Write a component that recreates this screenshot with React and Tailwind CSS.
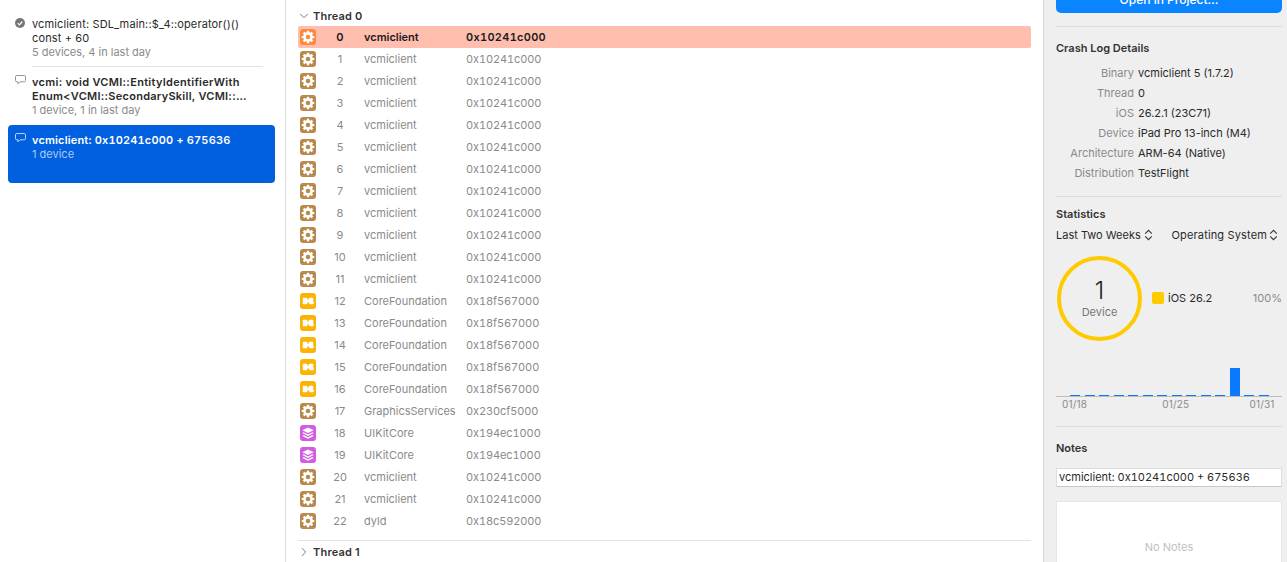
import { ChevronDown, ChevronRight } from 'lucide-react'

const vcmi = ['vcmiclient', '0x10241c000', 'gear']
const cf = ['CoreFoundation', '0x18f567000', 'cf']
const uikit = ['UIKitCore', '0x194ec1000', 'stack']

const frames = [
  vcmi, vcmi, vcmi, vcmi, vcmi, vcmi, vcmi, vcmi, vcmi, vcmi, vcmi, vcmi,
  cf, cf, cf, cf, cf,
  ['GraphicsServices', '0x230cf5000', 'gear'],
  uikit, uikit,
  vcmi, vcmi,
  ['dyld', '0x18c592000', 'gear'],
]

const details = [
  ['Binary', 'vcmiclient 5 (1.7.2)'],
  ['Thread', '0'],
  ['iOS', '26.2.1 (23C71)'],
  ['Device', 'iPad Pro 13-inch (M4)'],
  ['Architecture', 'ARM-64 (Native)'],
  ['Distribution', 'TestFlight'],
]

const bars = [1, 1, 1, 1, 1, 1, 1, 1, 1, 1, 1, 28, 1, 1]

function GearGlyph() {
  return (
    <svg viewBox="0 0 16 16" className="w-[16px] h-[16px]">
      <circle cx="8" cy="8" r="3.6" fill="none" stroke="white" strokeWidth="2.6" />
      <g stroke="white" strokeWidth="2.2">
        <path d="M8 1.8v2.4M8 11.8v2.4M1.8 8h2.4M11.8 8h2.4" />
        <path d="M3.6 3.6l1.7 1.7M10.7 10.7l1.7 1.7M3.6 12.4l1.7-1.7M10.7 5.3l1.7-1.7" />
      </g>
    </svg>
  )
}

function CfGlyph() {
  return (
    <svg viewBox="0 0 16 16" className="w-[16px] h-[16px]">
      <path
        d="M3.500 4.800h3a.8.8 0 0 1 .8.8v1h1.400v-1a.8.8 0 0 1 .8-.8h3a.8.8 0 0 1 .8.8v1.700L12.900 8l.9.700v1.700a.8.8 0 0 1-.8.8h-3a.8.8 0 0 1-.8-.8v-1H7.300v1a.8.8 0 0 1-.8.8h-3a.8.8 0 0 1-.8-.8V8.700L3.100 8l-.4-.7V5.600a.8.8 0 0 1 .8-.8z"
        fill="white"
      />
    </svg>
  )
}

function StackGlyph() {
  return (
    <svg viewBox="0 0 16 16" className="w-[16px] h-[16px]" fill="white">
      <path d="M8 2.400l5.600 2.800L8 8 2.400 5.200z" />
      <path d="M3.600 7.200L8 9.400l4.400-2.200 1.200.9L8 10.900 2.400 8.100z" />
      <path d="M3.600 10.100L8 12.300l4.400-2.200 1.200.9L8 13.800 2.400 11z" />
    </svg>
  )
}

function FrameIcon({ kind, active }) {
  const bg = active
    ? 'bg-[#fb8a3c]'
    : kind === 'cf'
      ? 'bg-[#fbb404]'
      : kind === 'stack'
        ? 'bg-[#d35ddf]'
        : 'bg-[#b98a4c]'
  return (
    <div className={`w-[16px] h-[16px] shrink-0 rounded-[3px] flex items-center justify-center ${bg}`}>
      {kind === 'gear' && <GearGlyph />}
      {kind === 'cf' && <CfGlyph />}
      {kind === 'stack' && <StackGlyph />}
    </div>
  )
}

function BubbleIcon({ color }) {
  return (
    <svg viewBox="0 0 11 10" className="w-[11px] h-[10px]" fill="none" stroke={color} strokeWidth="0.9">
      <path d="M1.800.5h7.400a1.300 1.300 0 0 1 1.300 1.300v3.700a1.300 1.300 0 0 1-1.300 1.300H5L3 8.800V6.800H1.800A1.300 1.300 0 0 1 .5 5.500V1.800A1.300 1.300 0 0 1 1.800.5z" />
    </svg>
  )
}

function UpDown() {
  return (
    <svg viewBox="0 0 9 12" className="w-[9px] h-[12px]" fill="none" stroke="#3a3a3a" strokeWidth="1.200">
      <path d="M1.200 4.600L4.500 1.400l3.300 3.200M1.200 7.400l3.300 3.200 3.300-3.200" />
    </svg>
  )
}

function Sidebar() {
  return (
    <div className="w-[286px] shrink-0 h-full border-r border-[#dcdcdc] bg-white text-[11px] leading-[14px] px-[8px] pt-[17px]">
      <div className="flex pl-[7px] pr-[14px]">
        <div className="w-[17px] shrink-0 pt-[1px]">
          <svg viewBox="0 0 10 10" className="w-[10px] h-[10px]">
            <circle cx="5" cy="5" r="5" fill="#757575" />
            <path d="M2.700 5.100l1.700 1.700 3-3.300" fill="none" stroke="white" strokeWidth="1.200" />
          </svg>
        </div>
        <div className="flex-1 pb-[7px] text-[#2a2a2a]">
          <div className="tracking-[0.13px] whitespace-nowrap">vcmiclient: SDL_main::$_4::operator()()</div>
          <div className="tracking-[0.13px]">const + 60</div>
          <div className="text-[#8a8a8a]">5 devices, 4 in last day</div>
        </div>
      </div>
      <div className="ml-[24px] mr-[14px] h-px bg-[#e2e2e2]" />
      <div className="flex pl-[7px] pr-[14px] pt-[8px]">
        <div className="w-[17px] shrink-0">
          <BubbleIcon color="#8a8a8a" />
        </div>
        <div className="flex-1 text-[#2a2a2a]">
          <div className="font-semibold whitespace-nowrap tracking-[0.3px]">vcmi: void VCMI::EntityIdentifierWith</div>
          <div className="font-semibold whitespace-nowrap tracking-[0.27px]">Enum&lt;VCMI::SecondarySkill, VCMI::…</div>
          <div className="text-[#8a8a8a]">1 device, 1 in last day</div>
        </div>
      </div>
      <div className="mt-[8px] h-[58px] w-[267px] rounded-[4px] bg-[#0160df] flex pl-[7px] pt-[8px]">
        <div className="w-[17px] shrink-0">
          <BubbleIcon color="#cfe2ff" />
        </div>
        <div>
          <div className="font-semibold text-white tracking-[0.17px] tabular-nums">vcmiclient: 0x10241c000 + 675636</div>
          <div className="text-[#a9cbf7]">1 device</div>
        </div>
      </div>
    </div>
  )
}

function FrameRow({ index, frame }) {
  const active = index === 0
  return (
    <div
      className={`h-[22px] flex items-center pl-[2px] rounded-[2px] ${
        active ? 'bg-[#ffbeae] font-semibold text-[#1b1b1b]' : 'text-[#8a8a8a]'
      }`}
    >
      <FrameIcon kind={frame[2]} active={active} />
      <div className="w-[48px] text-center shrink-0">{index}</div>
      <div className="w-[102px] shrink-0 whitespace-nowrap">{frame[0]}</div>
      <div className={`whitespace-nowrap tabular-nums ${active ? 'tracking-[0.3px]' : 'tracking-[-0.1px]'}`}>
        {frame[1]}
      </div>
    </div>
  )
}

function Threads() {
  return (
    <div className="flex-1 h-full min-w-0 bg-white text-[11px] leading-[14px] pl-[12px] pr-[12px]">
      <div className="h-[26px] pt-[9px] flex items-start font-semibold text-[#333333] tracking-[0.2px]">
        <ChevronDown className="w-[14px] h-[14px] -ml-[1px] text-[#666666]" strokeWidth={1.5} />
        <span className="ml-[2px]">Thread 0</span>
      </div>
      {frames.map((frame, i) => (
        <FrameRow key={i} index={i} frame={frame} />
      ))}
      <div className="h-px bg-[#e2e2e2] mt-[8px]" />
      <div className="pt-[4px] flex items-start font-semibold text-[#333333] tracking-[0.2px]">
        <ChevronRight className="w-[14px] h-[14px] -ml-[1px] text-[#666666]" strokeWidth={1.5} />
        <span className="ml-[2px]">Thread 1</span>
      </div>
    </div>
  )
}

function Inspector() {
  return (
    <div className="w-[244px] shrink-0 h-full border-l border-[#d4d4d4] bg-[#efefef] text-[11px] leading-[14px] pl-[12px] pr-[5px] text-[#2a2a2a]">
      <div className="-mt-[11px] h-[24px] rounded-[5px] bg-[#0a84ff] text-white text-center font-medium text-[12px] leading-[22px]">
        Open in Project…
      </div>
      <div className="h-px bg-[#dcdcdc] mt-[13px]" />

      <div className="font-semibold text-[#333333] mt-[14px]">Crash Log Details</div>
      <div className="mt-[11px] flex flex-col gap-[6px]">
        {details.map(([label, value]) => (
          <div key={label} className="flex">
            <div className="w-[78px] text-right text-[#8a8a8a] shrink-0">{label}</div>
            <div className="ml-[4px] whitespace-nowrap">{value}</div>
          </div>
        ))}
      </div>
      <div className="h-px bg-[#dcdcdc] mt-[16px]" />

      <div className="font-semibold text-[#333333] mt-[10px]">Statistics</div>
      <div className="mt-[7px] flex justify-between items-center pr-[4px]">
        <div className="flex items-center gap-[3px]">
          Last Two Weeks
          <UpDown />
        </div>
        <div className="flex items-center gap-[2px] tracking-[0.15px]">
          Operating System
          <UpDown />
        </div>
      </div>

      <div className="mt-[14px] flex items-center pl-[1px]">
        <div className="w-[85px] h-[85px] shrink-0 rounded-full border-[4px] border-[#fecb00] flex flex-col items-center justify-center">
          <div className="text-[24px] leading-[26px] font-light text-[#222222]">1</div>
          <div className="text-[#777777] mt-[1px]">Device</div>
        </div>
        <div className="w-[12px] h-[12px] rounded-[2px] bg-[#fecb00] ml-[10px] -mt-[2px]" />
        <div className="ml-[4px] -mt-[2px]">iOS 26.2</div>
        <div className="ml-auto -mt-[2px] text-[#8a8a8a]">100%</div>
      </div>

      <div className="mt-[27px] h-[29px] border-b border-[#bdbdbd] flex items-end pl-[14px] gap-[4.5px]">
        {bars.map((h, i) => (
          <div key={i} className="w-[10px] bg-[#0a78ff]" style={{ height: h }} />
        ))}
      </div>
      <div className="flex pl-[6px] text-[10px] leading-[12px] text-[#8a8a8a] mt-[1px] tracking-[0.2px]">
        <span>01/18</span>
        <span className="ml-[75px]">01/25</span>
        <span className="ml-[60px]">01/31</span>
      </div>
      <div className="h-px bg-[#dcdcdc] mt-[16px]" />

      <div className="font-semibold text-[#333333] mt-[14px]">Notes</div>
      <div className="mt-[13px] h-[19px] bg-white border border-[#dddddd] border-b-[#c8c8c8] pl-[2px] leading-[17px] whitespace-nowrap tabular-nums">
        vcmiclient: 0x10241c000 + 675636
      </div>
      <div className="mt-[14px] h-[100px] bg-white border border-[#e6e6e6] text-center text-[#c0c0c0] pt-[38px]">
        No Notes
      </div>
    </div>
  )
}

export default function App() {
  return (
    <div className="w-[1287px] h-[562px] overflow-hidden flex bg-white font-['Inter',sans-serif]">
      <Sidebar />
      <Threads />
      <Inspector />
    </div>
  )
}
